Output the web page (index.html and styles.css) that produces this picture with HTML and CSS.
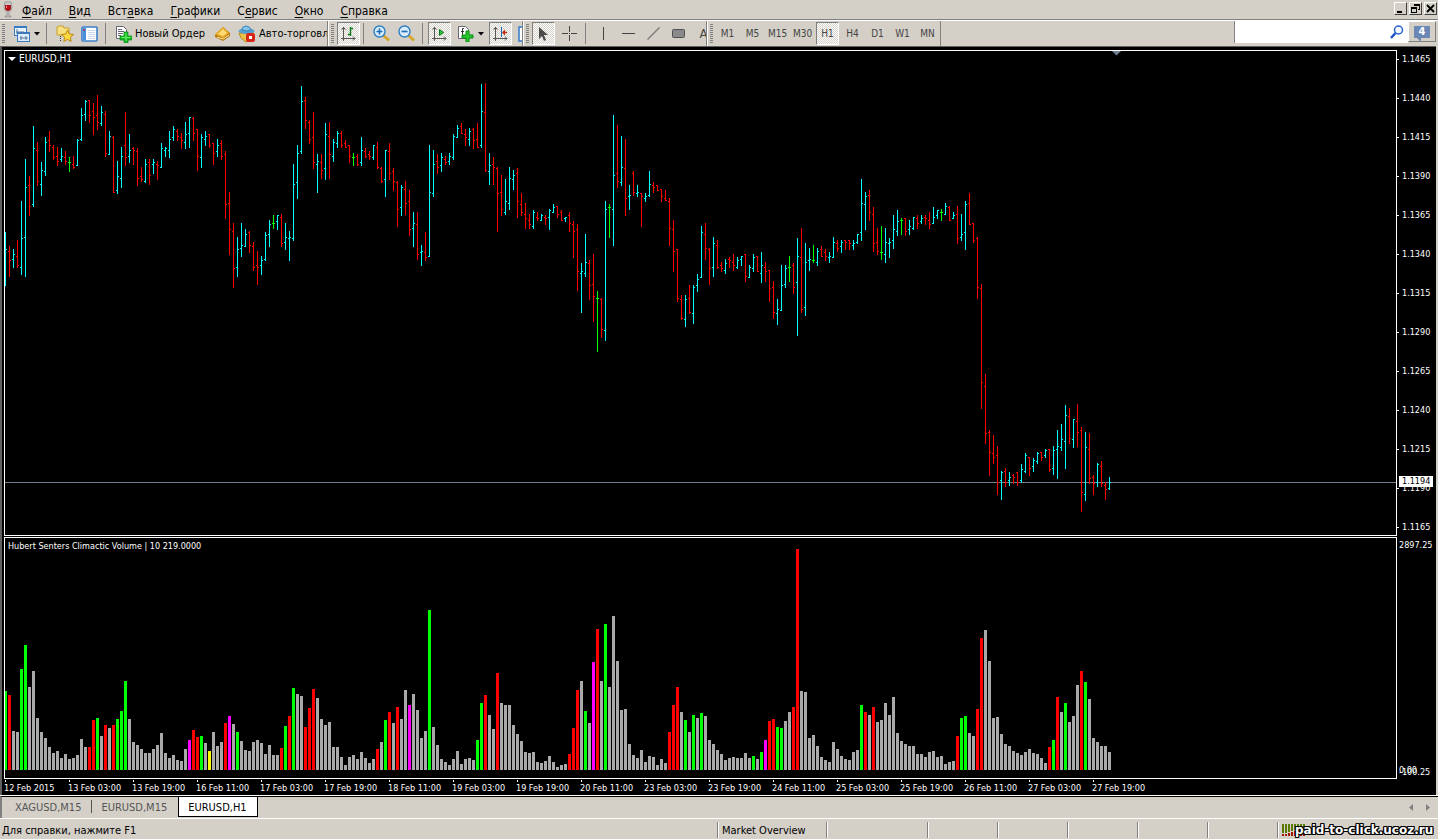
FILE: index.html
```html
<!DOCTYPE html>
<html lang="ru">
<head>
<meta charset="utf-8">
<title>EURUSD,H1</title>
<link rel="stylesheet" href="styles.css">
</head>
<body>
<header class="menubar">
  <svg class="glass" width="10" height="17" viewBox="0 0 10 17"><path d="M2 1h6l1 5q0 4-3 4.500v4.500h2v1H2v-1h2v-4.500Q1 10 1 6z" fill="#c9c9cf" stroke="#858589" stroke-width=".7"/><path d="M2 4h6v4L6 10H4L2 8z" fill="#b01418"/><path d="M3 5h1v2H3z" fill="#ff8b8b"/></svg>
  <nav class="menu">
    <button><u>Ф</u>айл</button><button><u>В</u>ид</button><button>Вст<u>а</u>вка</button><button><u>Г</u>рафики</button><button>С<u>е</u>рвис</button><button><u>О</u>кно</button><button><u>С</u>правка</button>
  </nav>
  <div class="window-buttons">
    <button aria-label="Свернуть"><svg width="11" height="11" viewBox="0 0 11 11"><path d="M2 8h5v2H2z"/></svg></button>
    <button aria-label="Восстановить"><svg width="11" height="11" viewBox="0 0 11 11"><path d="M4 1h6v6H8V6h1V3H4zM1 4h6v6H1zM2 6v3h4V6z" fill-rule="evenodd"/></svg></button>
    <button aria-label="Закрыть"><svg width="11" height="11" viewBox="0 0 11 11"><path d="M2 2l7 7M9 2l-7 7" stroke="#000" stroke-width="1.800"/></svg></button>
  </div>
</header>

<div class="toolbars">
  <div class="toolbar standard">
    <i class="grip"></i>
    <button class="tool profile" aria-label="Новый график"><svg width="18" height="18" viewBox="0 0 18 18"><rect x="1.500" y="1.500" width="12" height="9" fill="#e8f3fc" stroke="#3a7bc0"/><path d="M1 2h13" stroke="#3a7bc0" stroke-width="2"/><rect x="4.500" y="7.500" width="12" height="9" fill="#dcecfa" stroke="#3a7bc0"/><path d="M4 8h13" stroke="#3a7bc0" stroke-width="2"/><path d="M4 4v5M3 7h8M7 13h8M13 11v4M8 11v4" stroke="#54799c" fill="none"/></svg><svg width="6" height="4" viewBox="0 0 6 4"><path d="M0 0h6L3 3.500z"/></svg></button>
    <i class="sep"></i>
    <button class="tool" aria-label="Избранное"><svg width="18" height="18" viewBox="0 0 18 18"><path d="M1 2l2-1h4l1 2h5v7H1z" fill="#f6df80" stroke="#c9a02b"/><path d="M4.500 11v6" stroke="#333" stroke-dasharray="1 1"/><path d="M11.500 5l1.800 4 4.200.5-3.100 2.800.8 4.200-3.700-2.100-3.700 2.100.8-4.200L5.500 9.500 9.700 9z" fill="#ffd83d" stroke="#b98510"/></svg></button>
    <button class="tool" aria-label="Окно данных"><svg width="17" height="16" viewBox="0 0 17 16"><rect x="1" y="1" width="15" height="14" rx="1" fill="#fff" stroke="#3b80cb" stroke-width="1.600"/><path d="M2 2h3v12H2z" fill="#4a90da"/><path d="M3 3v2" stroke="#c00"/><path d="M7 4.500h7M7 6.500h7M7 8.500h7M7 10.500h7M7 12.500h7" stroke="#c8d8e8"/></svg></button>
    <i class="sep"></i>
    <button class="tool labelled"><svg width="17" height="18" viewBox="0 0 17 18"><path d="M1.500 1.500h7l3 3v9h-10z" fill="#fff" stroke="#667"/><path d="M3 4.500h4M3 6.500h6M3 8.500h5M3 10.500h3" stroke="#667"/><path d="M9 7h4v4h4v4h-4v3H9v-3H5v-4h4z" fill="#19b824" stroke="#078a12" stroke-width=".7"/><path d="M11 8v8M6.500 12.500h9" stroke="#6bf26b"/></svg><span>Новый Ордер</span></button>
    <button class="tool" aria-label="Терминал"><svg width="17" height="16" viewBox="0 0 17 16"><path d="M1 9l8-8 7 6v3l-7 5-8-4z" fill="#b8780c"/><path d="M1 8l8-7 6 6-6 5z" fill="#e8ad2c"/><path d="M4 8l5-5 4 4-4 3z" fill="#ffd974"/><path d="M3 11l6 2 6-4" stroke="#fbe6a4" fill="none"/></svg></button>
    <button class="tool labelled auto"><svg width="18" height="18" viewBox="0 0 18 18"><path d="M1 8h15l-3 7-5 2-5-4z" fill="#ecc34a" stroke="#bb8a18"/><ellipse cx="8.500" cy="6" rx="8" ry="3" fill="#559fd1"/><path d="M4 5q0-4 4-4t5 4q-4 2-9 0" fill="#83c5eb" stroke="#3d86b8"/><rect x="8" y="8" width="9" height="9" rx="2.500" fill="#d72718"/><path d="M11 11h3v3h-3z" fill="#fff"/></svg><span>Авто-торговля</span></button>
  </div>
  <div class="toolbar charts">
    <i class="grip"></i>
    <button class="tool pressed" aria-label="Бары"><svg width="17" height="17" viewBox="0 0 17 17"><path d="M3.500 2v14M1 13.500h14M1.500 4.500l2-2 2 2M13 11.500l2 2-2 2" stroke="#555" fill="none"/><path d="M10.500 2v9M8 9.500h2M11 3.500h2" stroke="#087a18" stroke-width="1.400"/></svg></button>
    <i class="sep"></i>
    <button class="tool" aria-label="Увеличить"><svg width="17" height="17" viewBox="0 0 17 17"><path d="M10 10l6 5.500" stroke="#d6a52c" stroke-width="3"/><circle cx="6.500" cy="6.500" r="5.500" fill="#d9eefc" stroke="#2e7ec4" stroke-width="1.400"/><path d="M3.500 6.500h6M6.500 3.500v6" stroke="#1c69b4" stroke-width="1.600"/></svg></button>
    <button class="tool" aria-label="Уменьшить"><svg width="17" height="17" viewBox="0 0 17 17"><path d="M10 10l6 5.500" stroke="#d6a52c" stroke-width="3"/><circle cx="6.500" cy="6.500" r="5.500" fill="#d9eefc" stroke="#2e7ec4" stroke-width="1.400"/><path d="M3.500 6.500h6" stroke="#1c69b4" stroke-width="1.600"/></svg></button>
    <i class="sep"></i>
    <button class="tool pressed" aria-label="Автопрокрутка"><svg width="17" height="17" viewBox="0 0 17 17"><path d="M3.500 2v14M1 13.500h14M1.500 4.500l2-2 2 2M13 11.500l2 2-2 2" stroke="#555" fill="none"/><path d="M8.500 4.500v6l4-3z" fill="#2fc43c" stroke="#087a18"/></svg></button>
    <button class="tool template" aria-label="Шаблоны"><svg width="17" height="17" viewBox="0 0 17 17"><path d="M1.500 1.500h7l3 3v9h-10z" fill="#fff" stroke="#667"/><path d="M7 3.500H5.500V11M4 6.500h3" stroke="#333" fill="none"/><path d="M9 6h3v4h4v3h-4v4H9v-4H5v-3h4z" fill="#25c92e" stroke="#078a12"/></svg><svg width="6" height="4" viewBox="0 0 6 4"><path d="M0 0h6L3 3.500z"/></svg></button>
    <button class="tool pressed" aria-label="Сдвиг графика"><svg width="17" height="17" viewBox="0 0 17 17"><path d="M3.500 2v14M1 13.500h14M1.500 4.500l2-2 2 2M13 11.500l2 2-2 2" stroke="#555" fill="none"/><path d="M9.500 2v10" stroke="#2268b0"/><path d="M15 7.500h-3" stroke="#c02c08" stroke-width="1.600"/><path d="M10 7.500l3-3v6z" fill="#c02c08"/></svg></button>
    <button class="tool cut" aria-label="Индикаторы"><svg width="17" height="16" viewBox="0 0 17 16"><rect x="1" y="1" width="15" height="14" fill="#fff" stroke="#3b80cb" stroke-width="1.600"/></svg></button>
  </div>
  <div class="toolbar lines">
    <i class="grip"></i>
    <button class="tool pressed arrow" aria-label="Курсор"><svg width="11" height="16" viewBox="0 0 11 16"><path d="M1 1v12l3-3 2 5 2-1-2-5h4z" fill="#4a4a4a"/></svg></button>
    <button class="tool" aria-label="Перекрестие"><svg width="15" height="15" viewBox="0 0 15 15"><path d="M7.500 0v6M7.500 9v6M0 7.500h6M9 7.500h6M7 7.500h1" stroke="#444"/></svg></button>
    <i class="sep"></i>
    <button class="tool" aria-label="Вертикальная линия"><svg width="13" height="13" viewBox="0 0 13 13"><path d="M6.500 0v13" stroke="#444"/></svg></button>
    <button class="tool" aria-label="Горизонтальная линия"><svg width="13" height="13" viewBox="0 0 13 13"><path d="M0 6.500h13" stroke="#444"/></svg></button>
    <button class="tool" aria-label="Трендовая линия"><svg width="13" height="13" viewBox="0 0 13 13"><path d="M.5 12.500l12-12" stroke="#777" stroke-width="1.300"/></svg></button>
    <button class="tool" aria-label="Прямоугольник"><svg width="13" height="9" viewBox="0 0 13 9"><rect x=".5" y=".5" width="12" height="8" rx="1" fill="#8a8a8c" stroke="#505050"/></svg></button>
    <button class="tool letter">A</button>
  </div>
  <div class="toolbar periods">
    <i class="grip"></i>
    <button class="tool">M1</button><button class="tool">M5</button><button class="tool">M15</button><button class="tool">M30</button><button class="tool pressed">H1</button><button class="tool">H4</button><button class="tool">D1</button><button class="tool">W1</button><button class="tool">MN</button>
  </div>
  <div class="spacer"></div>
  <label class="search"><input type="text" aria-label="Поиск"><svg width="14" height="14" viewBox="0 0 14 14"><circle cx="8.500" cy="5" r="4" fill="#f4f9ff" stroke="#2b62d0" stroke-width="1.500"/><path d="M5.500 8L1 13" stroke="#1c4fc4" stroke-width="2.400"/></svg></label>
  <button class="notices" aria-label="Сообщения: 4"><span>4</span></button>
</div>

<main class="chart-window">
  <section class="price-plot">
    <h1><svg width="8" height="4" viewBox="0 0 8 4"><path d="M0 0h8L4 4z" fill="#fff"/></svg>EURUSD,H1</h1>
    <svg class="shift-mark" width="9" height="5" viewBox="0 0 9 5"><path d="M0 0h9L4.500 4.500z" fill="#708090"/></svg>
    <svg class="drawing" id="price" shape-rendering="crispEdges"></svg>
  </section>
  <div class="price-axis">
    <span>1.1465</span><span>1.1440</span><span>1.1415</span><span>1.1390</span><span>1.1365</span><span>1.1340</span><span>1.1315</span><span>1.1290</span><span>1.1265</span><span>1.1240</span><span>1.1215</span><span>1.1190</span><span>1.1165</span>
    <b class="price-tag">1.1194</b>
  </div>
  <section class="volume-plot">
    <h2>Hubert Senters Climactic Volume | 10 219.0000</h2>
    <svg class="drawing" id="volume" shape-rendering="crispEdges"></svg>
  </section>
  <div class="volume-axis"><span>2897.25</span><span class="zero">0.00</span><span class="low">-100.25</span></div>
  <div class="time-axis">
    <span>12 Feb 2015</span><span>13 Feb 03:00</span><span>13 Feb 19:00</span><span>16 Feb 11:00</span><span>17 Feb 03:00</span><span>17 Feb 19:00</span><span>18 Feb 11:00</span><span>19 Feb 03:00</span><span>19 Feb 19:00</span><span>20 Feb 11:00</span><span>23 Feb 03:00</span><span>23 Feb 19:00</span><span>24 Feb 11:00</span><span>25 Feb 03:00</span><span>25 Feb 19:00</span><span>26 Feb 11:00</span><span>27 Feb 03:00</span><span>27 Feb 19:00</span>
  </div>
</main>

<nav class="tabs">
  <button>XAGUSD,M15</button><i></i><button>EURUSD,M15</button><button class="active">EURUSD,H1</button>
  <div class="scroll"><button aria-label="Назад"><svg width="4" height="7" viewBox="0 0 4 7"><path d="M4 0v7L0 3.500z" fill="#808080"/></svg></button><button aria-label="Вперёд"><svg width="4" height="7" viewBox="0 0 4 7"><path d="M0 0v7l4-3.500z" fill="#808080"/></svg></button></div>
</nav>
<footer class="status">
  <span class="help">Для справки, нажмите F1</span><span class="cell overview">Market Overview</span><span class="cell wide"></span><span class="cell"></span><span class="cell"></span><span class="cell"></span><span class="cell"></span><span class="cell"></span>
  <span class="cell traffic"><svg width="24" height="12" viewBox="0 0 24 12"><path d="M1 0v9M4 0v9M7 0v8M10 0v7M13 0v6M16 0v5M19 0v4M22 0v3" stroke="#5b7a00" stroke-width="2"/><path d="M1 10v2M4 10v2M7 9v3M10 8v4M13 7v5M16 6v6M19 5v7M22 4v8" stroke="#a01800" stroke-width="2"/></svg><a href="#">paid-to-click.ucoz.ru</a></span>
</footer>
<script src="chart.js"></script>
</body>
</html>
```
FILE: styles.css
```css
* { box-sizing: border-box; }
body {
  margin: 0;
  height: 100vh;
  display: flex;
  flex-direction: column;
  overflow: hidden;
  background: #d4d0c8;
  color: #000;
  font: 11px/14px "DejaVu Sans Condensed", "DejaVu Sans", sans-serif;
}
button {
  margin: 0;
  padding: 0;
  border: 0;
  background: none;
  color: inherit;
  font: inherit;
  white-space: nowrap;
}
svg { display: block; flex: none; }

.menubar {
  display: flex;
  align-items: center;
  flex: none;
  height: 20px;
  padding-left: 3px;
  border-bottom: 1px solid #808080;
}
.menu {
  display: flex;
  gap: 17px;
  margin-left: 9px;
  padding-top: 2px;
  font-size: 12px;
  line-height: 16px;
}
.menu u { text-underline-offset: 2px; }
.window-buttons { display: flex; gap: 2px; margin: 0 1px 2px auto; }
.window-buttons button {
  width: 13px;
  height: 13px;
  border: 1px solid;
  border-color: #fff #404040 #404040 #fff;
}

.toolbars {
  display: flex;
  flex: none;
  height: 26px;
  border-top: 1px solid #fff;
  color: #444;
}
.toolbar {
  display: flex;
  align-items: center;
  flex: none;
  overflow: hidden;
  border-right: 1px solid #808080;
}
.toolbar + .toolbar { border-left: 1px solid #fff; }
.standard { width: 328px; color: #000; }
.charts { width: 195px; }
.lines { width: 184px; }
.periods { width: 234px; font-size: 10px; }
.grip {
  flex: none;
  width: 3px;
  height: 20px;
  margin: 0 3px 0 2px;
  background: repeating-linear-gradient(#808080 0 1px, #d4d0c8 1px 2px);
}
.standard .grip { margin-right: 5px; }
.periods .grip { margin-right: 2px; }
.sep {
  flex: none;
  width: 1px;
  height: 21px;
  margin: 0 5px 0 3px;
  background: #808080;
}
.tool {
  display: flex;
  align-items: center;
  justify-content: center;
  flex: none;
  width: 25px;
  height: 23px;
}
.profile { width: 33px; gap: 3px; }
.template { width: 38px; gap: 4px; }
.labelled {
  width: auto;
  gap: 3px;
  padding: 0 5px 0 4px;
  font-size: 11px;
}
.auto { padding-left: 3px; }
.pressed {
  width: 23px;
  border: 1px solid;
  border-color: #808080 #fff #fff #808080;
  background: repeating-conic-gradient(#fff 0 25%, #d4d0c8 0 50%) 0 0 / 2px 2px;
}
.arrow { margin-right: 2px; }
.periods .pressed { margin: 0 1px; }
.cut { justify-content: flex-start; padding-left: 6px; }
.letter { font-size: 13px; color: #444; }
.spacer { flex: 1; }
.search {
  display: flex;
  align-items: center;
  align-self: flex-start;
  width: 174px;
  height: 22px;
  padding-right: 4px;
  border-left: 1px solid #808080;
  background: #fff;
}
.search input {
  flex: 1;
  min-width: 0;
  height: 20px;
  border: 0;
  outline: 0;
  background: none;
}
.notices {
  align-self: flex-start;
  width: 28px;
  height: 21px;
  margin-right: 2px;
  padding: 3px 5px;
  border: 1px solid;
  border-color: #fff #808080 #808080 #fff;
}
.notices span {
  position: relative;
  display: block;
  background: #6a87b5;
  color: #fff;
  font-size: 11px;
  font-weight: bold;
  line-height: 12px;
}
.notices span::after {
  content: "";
  position: absolute;
  left: 3px;
  top: 12px;
  border: 2px solid transparent;
  border-color: #6a87b5 #6a87b5 transparent transparent;
}

.chart-window {
  display: grid;
  grid-template: minmax(0, 1fr) 242px 16px / minmax(0, 1fr) 39px;
  row-gap: 1px;
  flex: 1;
  min-height: 0;
  margin-right: 2px;
  padding: 3px 0 0 2px;
  border-left: 2px solid #606060;
  border-top: 1px solid #606060;
  background: #000;
  color: #fff;
  font-size: 9px;
  line-height: 13px;
}
.price-plot, .volume-plot {
  position: relative;
  overflow: hidden;
  border: 1px solid #fff;
}
.volume-plot { display: flex; align-items: flex-end; }
.drawing { width: 100%; }
#price { height: 484px; }
#volume { height: 240px; }
h1, h2 {
  position: absolute;
  left: 3px;
  top: 2px;
  display: flex;
  align-items: center;
  gap: 4px;
  margin: 0;
  font: inherit;
}
h1 { top: 1px; gap: 3px; font-size: 10px; }
.shift-mark { position: absolute; left: 1107px; top: 0; }
.price-axis {
  position: relative;
  display: flex;
  flex-direction: column;
  gap: 26px;
  padding-top: 3px;
}
.price-axis span { display: flex; align-items: center; gap: 3px; }
.price-axis span::before { content: ""; width: 2px; height: 1px; background: #fff; }
.price-tag {
  position: absolute;
  left: 2px;
  top: 426px;
  width: 34px;
  padding-left: 3px;
  background: #fff;
  color: #000;
  font-weight: normal;
  line-height: 11px;
}
.volume-axis {
  position: relative;
  padding: 2px 0 0 2px;
}
.volume-axis .zero, .volume-axis .low { position: absolute; left: 2px; bottom: 2px; }
.volume-axis .low { bottom: 0; }
.time-axis { display: flex; grid-column: 1 / -1; }
.time-axis span {
  flex: none;
  width: 64px;
  white-space: nowrap;
}
.time-axis span::before {
  content: "";
  display: block;
  width: 1px;
  height: 2px;
  margin-left: 1px;
  background: #fff;
}

.tabs {
  display: flex;
  align-items: flex-start;
  flex: none;
  height: 22px;
  border-top: 1px solid #000;
  border-left: 2px solid #808080;
  box-shadow: 0 -1px #fff;
  color: #555;
}
.tabs > button { height: 20px; padding: 2px 10px 0 13px; }
.tabs > button:nth-of-type(2) { padding: 2px 11px 0 9px; }
.tabs i { width: 1px; height: 13px; margin-top: 3px; background: #555; }
.tabs > button.active {
  padding: 2px 10px 0 9px;
  border: 1px solid #000;
  border-top: 0;
  background: #fff;
  color: #000;
}
.scroll { display: flex; gap: 13px; margin: 7px 8px 0 auto; }
.status {
  display: flex;
  flex: none;
  height: 21px;
  padding-top: 3px;
  border-top: 1px solid #fff;
  line-height: 18px;
}
.help { flex: 1; padding-left: 2px; }
.cell {
  width: 70px;
  margin-bottom: 1px;
  border-left: 1px solid #808080;
  box-shadow: inset 1px 0 #fff;
}
.overview { width: 109px; padding-left: 4px; }
.wide { width: 101px; }
.traffic {
  display: flex;
  align-items: center;
  width: 161px;
  padding-left: 4px;
}
.traffic a {
  position: relative;
  margin-left: -11px;
  color: #fff;
  font: bold 12px/16px "DejaVu Sans", sans-serif;
  text-decoration: none;
  white-space: nowrap;
  text-shadow: -1px -1px #000, 1px -1px #000, -1px 1px #000, 1px 1px #000, 0 1px #000, 0 -1px #000, 1px 0 #000, -1px 0 #000;
}
```
FILE: chart.js
```js
// One bar per hour: direction (c up, r down, g flat), high, low, open, close.
// Values count down from the top of each block, three units to a pixel.
const BLOCKS = [
  { top: 19, bars: `c486,648,538,538 r528,621,544,571 c537,594,568,553 r510,594,559,586 c393,615,592,505 c267,621,502,352 r318,438,346,409 c168,411,403,235 r216,348,241,334 c276,378,343,301 c201,318,304,217 r183,246,211,226 r225,270,232,262 r231,288,259,274 c234,276,268,259 r243,285,262,274 g261,306,277,277 r258,297,283,292 c207,288,286,211 c114,213,208,136 c90,153,133,94 r90,159,91,136 r99,195,124,142 r75,180,136,157 c108,168,160,127 r123,261,133,250 c183,255,253,199 r198,369,202,367 c273,372,361,319 c231,354,325,259 r126,288,226,262 c192,279,259,241 r231,285,235,241 r234,348,244,325 r291,336,319,328 c267,339,334,283 r267,345,277,316 c267,312,283,277 r273,330,283,286 c219,294,292,235 c231,261,241,235 c183,264,241,208 c168,213,202,178 r177,213,184,199 r189,237,202,211 c156,237,217,193 c141,234,190,142 r141,213,145,190 r177,303,178,259 c192,294,262,202 c183,228,208,199 r192,234,193,226 r219,285,220,250 c207,261,244,226 r210,270,220,259 r243,447,253,403 r366,555,400,478 r459,654,484,595 c501,621,592,538 c459,561,535,526 c477,531,529,493 r483,549,487,526 r516,603,529,592 r543,645,586,592 c558,615,586,571 c486,573,568,496 c450,531,493,463 g435,477,460,460 c435,480,454,436 r432,531,442,520 c459,540,517,502 c483,573,505,502 c282,513,505,343 c225,387,337,250 c48,252,244,94 r81,177,91,151 r150,222,157,208 r126,297,202,277 c252,369,283,274 r252,327,277,301 c159,330,295,193 r156,327,199,253 c207,276,259,217 c183,234,220,190 r183,234,190,226 r210,234,220,232 r225,279,226,259 g249,288,262,262 r252,288,259,283` },
  { top: 19, bars: `c201,288,277,241 r234,264,244,259 r243,270,253,259 c225,270,262,226 r216,297,232,292 r291,339,295,334 c240,381,328,241 r219,330,244,310 r294,363,304,334 r333,471,337,418 c345,438,412,352 r333,435,358,400 r360,498,394,478 c426,531,475,460 r426,570,463,553 c525,588,547,544 r486,573,547,562 c225,561,559,367 c240,381,370,283 r252,312,274,292 c249,306,286,262 r258,285,268,277 c249,285,274,259 c192,270,262,199 c165,204,202,175 r159,192,169,190 r177,228,193,202 c174,228,208,184 r174,237,178,211 r159,234,208,232 c42,234,226,124 r39,306,127,301 c249,345,304,286 r261,345,283,292 r291,486,295,370 r315,438,367,418 c327,435,427,394 c291,420,400,325 c300,360,328,316 r294,444,310,394 r369,438,403,427 r399,477,433,445 r432,477,451,463 c420,477,469,427 r426,453,442,445 c432,453,451,436 r435,465,442,445 c417,480,442,421 c402,429,427,412 r408,444,409,433 r420,453,427,451 c441,456,445,442 r426,486,436,460 r453,564,463,484 r462,663,478,604 c579,729,610,604 c492,621,610,577 r570,690,580,646 r552,756,643,679 g663,846,685,685 r684,804,688,778 c393,813,781,418 g402,504,412,412 c135,528,418,316 r165,354,310,334 c198,348,337,292 r207,438,295,385 c345,420,379,376 r303,378,310,367 c345,381,370,367 r369,471,370,379 c369,396,385,379 c303,381,376,343 r336,369,346,352 r345,363,346,361 r357,396,358,379 r360,393,385,391 r384,528,394,475 r450,606,478,544 r537,696,538,685 r675,750,688,745 c675,771,748,688 r645,732,685,727 c645,762,730,652 c612,666,646,628 c468,624,622,487 r459,570,493,535 r534,645,538,595 c501,621,592,520 r510,597,526,592` },
  { top: 119, bars: `r276,306,286,295 c267,312,301,280 r261,294,268,271 r252,303,277,286 c261,297,292,271 c258,288,268,259 r252,336,253,319 c285,324,322,292 c252,306,295,262 r258,306,259,304 c246,339,310,286 r276,336,292,304 r300,396,301,355 r333,447,352,427 c387,465,430,418 c285,423,421,346 c285,354,343,295 g258,336,292,292 r279,372,286,352 c204,498,337,259 r174,429,262,418 c219,438,412,277 c234,303,271,268 g225,279,271,271 c234,288,277,244 r228,261,238,259 r237,273,247,259 c246,279,262,259 c201,264,262,217 r210,246,220,235 c210,249,229,217 r210,240,211,217 r210,240,211,220 c210,240,226,220 c192,222,217,193 c27,213,187,100 c66,180,103,79 r60,153,76,127 r111,246,133,220 r174,255,217,244 g168,270,247,247 c174,279,253,217 c204,264,220,217 c135,237,211,178 c120,198,184,154 g144,195,151,151 r144,198,145,184 c150,195,178,169 c141,180,175,142 r135,177,145,160 c135,162,154,145 r135,165,142,145 r126,177,151,163 c111,162,160,142 c120,147,136,121 g117,153,127,127 c99,135,133,109 r108,153,112,151 c126,147,145,136 r108,222,133,205 c132,213,202,193 c93,240,187,103 r69,165,100,163 r159,219,160,211 r201,387,205,352 r342,717,355,637 r612,822,649,790 r780,918,787,847 r795,882,850,862 r828,975,856,937 c903,990,931,907 r894,951,904,937 c906,948,931,922 r912,942,916,922 r906,948,907,937 c882,939,931,898 c849,909,904,856 r861,918,862,895 c864,906,889,871 c846,882,874,850 r846,873,847,862 c837,864,856,841 r837,906,838,898 c828,915,895,841 c780,927,838,829 c762,843,832,808 c705,897,814,736 r714,822,739,805 c747,834,808,748 r702,831,754,787` },
  { top: 349, bars: `r81,336,91,277 c96,303,283,142 r99,252,148,235 r226,285,232,250 c189,261,247,193 r183,261,199,250 r247,300,256,268 c231,270,265,247` }
];

// Volume of each hour, three units to a pixel. A letter sets the colour:
// g green, r red, m magenta, y yellow; grey when there is none.
const VOLUMES = [
  { base: 705, bars: `g468 r480 588 591 g402 g330 456 408 549 591 609 636 654 648 669 657 672 669 660 612 636 r636 r555 g549 603 r570 579 r570 g552 g528 g438 552 621 630 642 654 654 642 630 594 654 669 660 675 678 642 m615 r585 r606 g603 624 y648 591 633 621 r564 m543 567 g591 618 645 648 621 615 624 657 630 660 660 r639 g573 r543 g459 477 483 r576 r519 r462 489 552 570 561 636 636 666 690 666 660 672 651 669 684` },
  { base: 690, bars: `657 r627 606 g540 r516 549 r501 537 450 m495 462 510 594 573 g210 561 615 657 666 675 657 633 672 657 654 660 g600 g489 r465 525 567 r399 489 495 495 555 582 603 636 639 636 666 669 663 648 666 681 675 672 r642 r564 r450 423 g513 549 m366 r267 423 g252 441 228 363 510 507 612 645 654 630 666 648 651 675 657 669 r576 r495 r441 516 g540 576 g525 534 g519 528 600 612 630 642 660 654 651 654` },
  { base: 690, bars: `654 639 654 g648 657 g636 m600 r543 r537 g561 g564 543 516 r501 r27 453 456 594 585 618 651 660 666 606 627 648 657 660 636 630 g495 r516 525 r501 546 540 489 525 471 579 603 612 618 618 642 642 651 636 633 651 648 672 666 663 r588 g534 g528 579 588 r507 r294 270 363 534 531 582 612 618 633 639 645 636 627 639 642 654 669 r621 g600 r471 516 g489 546 528 435 r393 g426 477 594 606 618 618 636` }
];

const STEP = 4;
const PRICE_COLORS = { c: "#00ffff", r: "#ff0000", g: "#00ff00" };
const VOLUME_COLORS = { g: "#00ff00", r: "#ff0000", m: "#ff00ff", y: "#ffff00" };

function rect(x, y, width, height, fill) {
  return `<rect x="${x}" y="${y}" width="${width}" height="${height}" fill="${fill}"/>`;
}

let x = 0;
let out = rect(0, 431, "100%", 1, "#708090");
for (const block of BLOCKS) {
  for (const bar of block.bars.split(" ")) {
    const fill = PRICE_COLORS[bar[0]];
    const [high, low, open, close] = bar.slice(1).split(",").map(v => block.top + Math.floor(v / 3));
    out += rect(x, high, 1, low - high, fill) + rect(x - 1, open, 1, 1, fill) + rect(x + 1, close, 1, 1, fill);
    x += STEP;
  }
}
document.getElementById("price").innerHTML = out;

x = -1;
out = "";
for (const block of VOLUMES) {
  for (const bar of block.bars.split(" ")) {
    const fill = VOLUME_COLORS[bar[0]] || "#a9a9a9";
    const height = Math.round((block.base - parseInt(bar.replace(/\D/, ""), 10)) / 3);
    out += rect(x, 232 - height, 3, height, fill);
    x += STEP;
  }
}
document.getElementById("volume").innerHTML = out;
```
